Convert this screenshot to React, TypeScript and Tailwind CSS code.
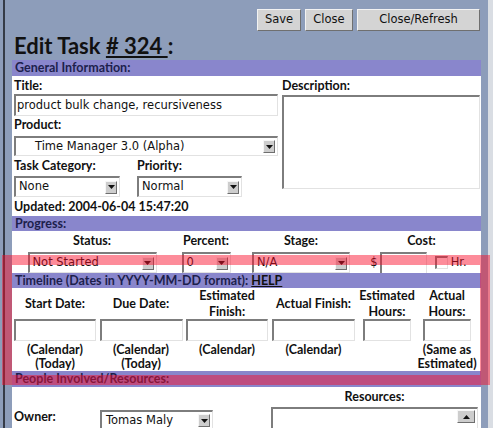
import React from "react"

import type { FC, ReactNode } from "react"

const field =
  "bg-white border-t-2 border-l-2 border-r border-b border-t-[#7d7d7d] border-l-[#7d7d7d] border-r-[#e2e2e2] border-b-[#e2e2e2]"

const Arrow: FC<{ up?: boolean; className?: string }> = ({ up, className = "" }) => (
  <span
    className={`flex items-center justify-center w-[12px] h-[13px] bg-[#cdcdcd] border border-t-[#f6f6f6] border-l-[#f6f6f6] border-r-[#6e6e6e] border-b-[#6e6e6e] ${className}`}
  >
    <svg width="7" height="4" viewBox="0 0 7 4">
      <path d={up ? "M0 4L3.5 0L7 4Z" : "M0 0L7 0L3.5 4Z"} fill="#111" />
    </svg>
  </span>
)

const Select: FC<{ className: string; text: string; textClass?: string }> = ({
  className,
  text,
  textClass = "pl-[3px]",
}) => (
  <div className={`${field} ${className} flex items-center justify-between`}>
    <span className={`font-['DejaVu_Sans',sans-serif] font-normal text-[11.5px] text-[#111] ${textClass}`}>
      {text}
    </span>
    <Arrow className="mr-[2px]" />
  </div>
)

const Input: FC<{ className: string; text?: string }> = ({ className, text }) => (
  <div
    className={`${field} ${className} flex items-center pl-[1px] font-['DejaVu_Sans',sans-serif] font-normal text-[11.5px] text-[#111]`}
  >
    {text}
  </div>
)

const Bar: FC<{ children: ReactNode }> = ({ children }) => (
  <div className="h-[16px] bg-[#8986cc] pl-[3px] text-[12.5px] leading-[16px] text-[#1d1f4c]">
    {children}
  </div>
)

const Btn: FC<{ className: string; label: string }> = ({ className, label }) => (
  <button
    className={`h-[22px] ${className} bg-[#d4d4d4] border border-t-[#f2f2f2] border-l-[#f2f2f2] border-r-[#6f6f6f] border-b-[#6f6f6f] font-['DejaVu_Sans',sans-serif] font-normal text-[11.5px] text-[#111]`}
  >
    {label}
  </button>
)

const timeline = [
  { w: "w-[86px]", iw: "w-[82px]", head: ["Start Date:"], foot: ["(Calendar)", "(Today)"] },
  { w: "w-[86px]", iw: "w-[83px]", head: ["Due Date:"], foot: ["(Calendar)", "(Today)"] },
  { w: "w-[86px]", iw: "w-[82px]", head: ["Estimated", "Finish:"], foot: ["(Calendar)"] },
  { w: "w-[87px]", iw: "w-[83px]", head: ["Actual Finish:"], foot: ["(Calendar)"] },
  { w: "w-[60px]", iw: "w-[48px]", head: ["Estimated", "Hours:"], foot: [] },
  { w: "w-[60px]", iw: "w-[48px]", head: ["Actual", "Hours:"], foot: ["(Same as", "Estimated)"] },
]

const App: FC = () => {
  return (
    <div className="relative w-[493px] h-[428px] overflow-hidden flex bg-[#8d9dba] font-['Lato',sans-serif] font-bold text-[#111]">
      <div className="w-[3px] shrink-0" />
      <div className="w-[2px] shrink-0 bg-[#353b47]" />

      <div className="flex-1 flex flex-col px-[7px]">
        {/* buttons */}
        <div className="mt-[9px] flex justify-end gap-[4px] mr-[1px]">
          <Btn className="w-[44px]" label="Save" />
          <Btn className="w-[48px]" label="Close" />
          <Btn className="w-[123px]" label="Close/Refresh" />
        </div>

        <h1 className="h-[29px] pl-[2px] text-[22px] leading-[29px] text-[#111]">
          Edit Task <span className="underline underline-offset-[2px]"># 324 </span>:
        </h1>

        {/* general */}
        <Bar>General Information:</Bar>
        <div className="bg-white h-[140px] flex text-[12.5px]">
          <div className="w-[267px] pl-[2px] pt-[2px] flex flex-col">
            <div className="h-[16px] leading-[16px]">Title:</div>
            <Input className="w-[264px] h-[22px]" text="product bulk change, recursiveness" />
            <div className="h-[20px] leading-[18px]">Product:</div>
            <Select className="w-[264px] h-[20px]" text="Time Manager 3.0 (Alpha)" textClass="pl-[19px]" />
            <div className="flex h-[20px] leading-[20px]">
              <span className="w-[123px]">Task Category:</span>
              <span>Priority:</span>
            </div>
            <div className="flex">
              <Select className="w-[106px] h-[21px]" text="None" />
              <Select className="ml-[17px] w-[105px] h-[21px]" text="Normal" />
            </div>
            <div className="h-[19px] leading-[19px]">Updated: 2004-06-04 15:47:20</div>
          </div>
          <div className="pl-[3px] pt-[2px] flex flex-col">
            <div className="h-[16px] leading-[16px]">Description:</div>
            <div className={`${field} mt-[1px] w-[198px] h-[94px]`} />
          </div>
        </div>

        {/* progress */}
        <div className="h-[15px] bg-[#8986cc] pl-[3px] text-[12.5px] leading-[15px] text-[#1d1f4c]">Progress:</div>
        <div className="bg-white h-[46px] grid grid-cols-[160px_68px_122px_119px] grid-rows-[21px_21px] justify-items-center items-center text-[12.5px]">
          <span>Status:</span>
          <span>Percent:</span>
          <span>Stage:</span>
          <span>Cost:</span>
          <Select className="w-[129px] h-[21px]" text="Not Started" />
          <Select className="w-[49px] h-[21px]" text="0" />
          <Select className="w-[98px] h-[21px]" text="N/A" />
          <div className="flex items-center mr-[6px] font-['DejaVu_Sans',sans-serif] font-normal text-[11.5px]">
            <span className="mr-[2px]">$</span>
            <Input className="w-[47px] h-[22px]" />
            <span className={`${field} ml-[8px] w-[13px] h-[13px]`} />
            <span className="ml-[3px]">Hr.</span>
          </div>
        </div>

        {/* timeline */}
        <div className="h-[15px] bg-[#8986cc] pl-[3px] text-[12.5px] leading-[15px] text-[#1d1f4c]">
          Timeline (Dates in YYYY-MM-DD format): <span className="underline text-[#111]">HELP</span>
        </div>
        <div className="bg-white h-[85px] flex text-[12.5px]">
          {timeline.map(c => (
            <div key={c.head.join("")} className={`${c.w} flex flex-col items-center`}>
              <div className="h-[31px] flex flex-col justify-center text-center leading-[16px]">
                {c.head.map(h => (
                  <span key={h}>{h}</span>
                ))}
              </div>
              <Input className={`${c.iw} h-[22px]`} />
              <div className="pt-[2px] flex flex-col items-center leading-[14px]">
                {c.foot.map(f => (
                  <span key={f}>{f}</span>
                ))}
              </div>
            </div>
          ))}
        </div>

        {/* people */}
        <Bar>People Involved/Resources:</Bar>
        <div className="bg-white flex-1 text-[12.5px]">
          <div className="flex h-[20px] leading-[20px]">
            <div className="w-[259px]" />
            <div className="w-[207px] text-center">Resources:</div>
          </div>
          <div className="flex items-start">
            <div className="w-[88px] pl-[2px] pt-[2px] leading-[16px]">Owner:</div>
            <Select className="mt-[3px] w-[113px] h-[20px]" text="Tomas Maly" textClass="pl-[4px]" />
            <div className="w-[58px]" />
            <div className={`${field} w-[207px] h-[40px] flex justify-end`}>
              <Arrow up className="mt-[1px] mr-[2px] w-[18px]" />
            </div>
          </div>
        </div>
      </div>

      <div className="w-[5px] shrink-0 bg-[#d9dde3]" />

      {/* highlight */}
      <div className="absolute left-[2px] top-[255px] w-[488px] h-[130px] border-[10px] border-[rgba(250,10,40,0.47)] pointer-events-none" />
    </div>
  )
}

export default App
